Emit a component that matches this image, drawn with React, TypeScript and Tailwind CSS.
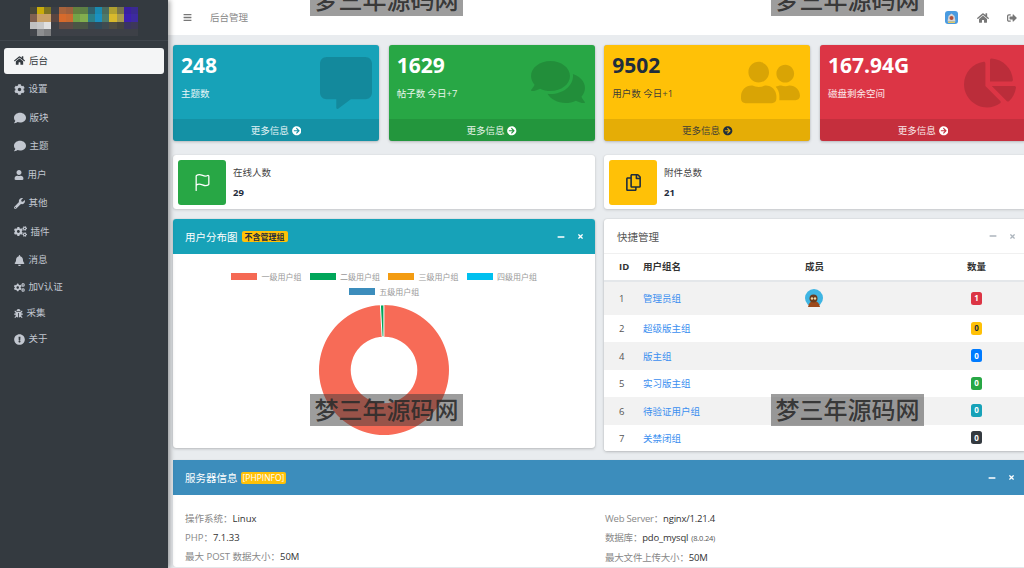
import type { ReactNode } from 'react'
import {
  FaArrowCircleRight,
  FaBars,
  FaBell,
  FaBug,
  FaChartPie,
  FaCog,
  FaCogs,
  FaComment,
  FaCommentAlt,
  FaComments,
  FaExclamationCircle,
  FaHome,
  FaMinus,
  FaRegCopy,
  FaSignOutAlt,
  FaTimes,
  FaUser,
  FaUserFriends,
  FaWrench,
} from 'react-icons/fa'
import { Flag } from 'lucide-react'

const NAV_ITEMS = [
  { label: '后台', icon: <FaHome size={11} />, row: 'h-[28.5px]', active: true },
  { label: '设置', icon: <FaCog size={11} />, row: 'h-[28.5px]' },
  { label: '版块', icon: <FaComment size={12} />, row: 'h-[28.5px]' },
  { label: '主题', icon: <FaComment size={12} />, row: 'h-[28.5px]' },
  { label: '用户', icon: <FaUser size={10} />, row: 'h-[28.5px]' },
  { label: '其他', icon: <FaWrench size={11} />, row: 'h-[28.5px]' },
  { label: '插件', icon: <FaCogs size={13} />, row: 'h-[28.5px]' },
  { label: '消息', icon: <FaBell size={11} />, row: 'h-[28px]' },
  { label: '加V认证', icon: <FaCogs size={11} />, row: 'h-[26.5px]' },
  { label: '采集', icon: <FaBug size={9} />, row: 'h-[26px]' },
  { label: '关于', icon: <FaExclamationCircle size={11} />, row: 'h-[26px]' },
]

const STATS: {
  value: string
  label: string
  bg: string
  text: string
  muted: string
  iconPos: string
  icon: ReactNode
}[] = [
  {
    value: '248',
    label: '主题数',
    bg: 'bg-[#17a2b8]',
    text: 'text-white',
    muted: 'text-white/90',
    iconPos: 'right-[7px] top-[12px]',
    icon: <FaCommentAlt size={52} />,
  },
  {
    value: '1629',
    label: '帖子数 今日+7',
    bg: 'bg-[#28a745]',
    text: 'text-white',
    muted: 'text-white/90',
    iconPos: 'right-[10px] top-[10px]',
    icon: <FaComments size={54} />,
  },
  {
    value: '9502',
    label: '用户数 今日+1',
    bg: 'bg-[#ffc107]',
    text: 'text-[#1f2d3d]',
    muted: 'text-[#1f2d3d]/90',
    iconPos: 'right-[10px] top-[7.5px]',
    icon: <FaUserFriends size={59} />,
  },
  {
    value: '167.94G',
    label: '磁盘剩余空间',
    bg: 'bg-[#dc3545]',
    text: 'text-white',
    muted: 'text-white/90',
    iconPos: 'right-[10px] top-[11.5px]',
    icon: <FaChartPie size={52} />,
  },
]

const LEGEND = [
  { label: '一级用户组', color: 'bg-[#f56954]' },
  { label: '二级用户组', color: 'bg-[#00a65a]' },
  { label: '三级用户组', color: 'bg-[#f39c12]' },
  { label: '四级用户组', color: 'bg-[#00c0ef]' },
  { label: '五级用户组', color: 'bg-[#3c8dbc]' },
]

const GROUPS = [
  { id: 1, name: '管理员组', count: 1, badge: 'bg-[#dc3545] text-white', row: 'h-[33px] bg-[#f2f2f2]', avatar: true },
  { id: 2, name: '超级版主组', count: 0, badge: 'bg-[#ffc107] text-[#1f2d3d]', row: 'h-[27px] bg-white' },
  { id: 4, name: '版主组', count: 0, badge: 'bg-[#007bff] text-white', row: 'h-[28px] bg-[#f2f2f2]' },
  { id: 5, name: '实习版主组', count: 0, badge: 'bg-[#28a745] text-white', row: 'h-[27px] bg-white' },
  { id: 6, name: '待验证用户组', count: 0, badge: 'bg-[#17a2b8] text-white', row: 'h-[27.5px] bg-[#f2f2f2]' },
  { id: 7, name: '关禁闭组', count: 0, badge: 'bg-[#343a40] text-white', row: 'h-[27.5px] bg-white' },
]

const LOGO_ROWS = [
  ['#474739', '#c9ac0a', '#7e7423', '#3c3f45', '#a8633b', '#9c5f3e', '#64803f', '#5d7f45', '#32606b', '#1a8ab0', '#4a6b5e', '#b0a030', '#77744a', '#3a1fa0', '#3a2a90'],
  ['#80604f', '#c8a068', '#c8a068', '#5a4540', '#d76a2b', '#cb6a30', '#74a348', '#82ae4e', '#2c7f87', '#1b90c0', '#4d7a6a', '#d8b92c', '#a89a4c', '#3d1fb0', '#3d2aa0'],
  ['#c0c0c0', '#c8c8c8', '#e0e0e0', '#3d3f45', '#5f4a45', '#604a45', '#4a5545', '#4a5545', '#3a4650', '#2f4a5a', '#3f4a50', '#4f4d42', '#45453f', '#3a3560', '#3d3858'],
  ['#42454b', '#8d8e90', '#7d7e80', '#3c4047', '#3d4047', '#3d4047', '#3d4047', '#3d4047', '#3d4047', '#3d4047', '#3d4047', '#3d4047', '#3d4047', '#3d4047', '#3d4047'],
]

function Logo() {
  return (
    <svg width="110" height="29" viewBox="0 0 15 4" shapeRendering="crispEdges">
      {LOGO_ROWS.map((row, y) => row.map((fill, x) => <rect key={`${x}-${y}`} x={x} y={y} width="1" height="1" fill={fill} />))}
    </svg>
  )
}

function Sidebar() {
  return (
    <aside className="z-10 flex h-full w-[168px] shrink-0 flex-col bg-[#343a40] shadow-[2px_0_5px_rgba(0,0,0,0.35)]">
      <div className="flex h-[41px] shrink-0 items-start border-b border-[#3f454c] pl-[29px] pt-[7px]">
        <Logo />
      </div>
      <nav className="px-[4px] pt-[5.5px]">
        {NAV_ITEMS.map((item) => (
          <div key={item.label} className={`flex items-center ${item.row}`}>
            <a
              className={
                item.active
                  ? 'flex h-[26px] w-full items-center gap-[4px] rounded-[3px] bg-[#f4f5f6] pl-[10px] text-[9.5px] text-[#343a40]'
                  : 'flex h-[26px] w-full items-center gap-[4px] rounded-[3px] pl-[9.5px] text-[9.5px] text-[#c2c7d0]'
              }
            >
              {item.icon}
              <span>{item.label}</span>
            </a>
          </div>
        ))}
      </nav>
    </aside>
  )
}

function TopNav() {
  return (
    <header className="flex h-[35px] shrink-0 items-center bg-white pl-[15px] pr-[7px] text-[#777]">
      <FaBars size={9} />
      <span className="ml-[18px] pt-[2px] text-[9.5px] text-[#888]">后台管理</span>
      <div className="ml-auto flex items-center">
        <svg width="13" height="13" viewBox="0 0 13 13">
          <rect width="13" height="13" rx="3" fill="#4a9be0" />
          <path d="M2.5 10.5 L3.5 5 L6.5 2.5 L9.5 5 L10.5 10.5 Z" fill="#d8d4d4" />
          <circle cx="6.5" cy="7" r="2" fill="#b0503a" />
          <rect x="3" y="10.5" width="7" height="1.5" fill="#e0c868" />
        </svg>
        <FaHome size={12} className="ml-[19px]" />
        <FaSignOutAlt size={10} className="ml-[18px]" />
      </div>
    </header>
  )
}

function StatCard({ stat }: { stat: (typeof STATS)[number] }) {
  return (
    <div className={`relative flex h-[96px] flex-col overflow-hidden rounded-[3px] shadow-[0_0_1px_rgba(0,0,0,0.2),0_1px_3px_rgba(0,0,0,0.2)] ${stat.bg} ${stat.text}`}>
      <div className="h-[74px] pl-[8px] pt-[6px]">
        <div className="text-[21px] font-bold leading-[28px]">{stat.value}</div>
        <div className={`mt-[8px] text-[9.5px] leading-[14px] ${stat.muted}`}>{stat.label}</div>
      </div>
      <div className={`absolute text-black/15 ${stat.iconPos}`}>{stat.icon}</div>
      <div className="flex h-[22px] items-center justify-center gap-[3px] bg-black/10 pt-[2px] text-[9.5px]">
        <span className={stat.muted}>更多信息</span>
        <FaArrowCircleRight size={9.5} />
      </div>
    </div>
  )
}

function InfoBox({ label, value, iconBg, icon }: { label: string; value: number; iconBg: string; icon: ReactNode }) {
  return (
    <div className="flex h-[54px] items-center rounded-[3px] bg-white pl-[5px] shadow-[0_0_1px_rgba(0,0,0,0.15),0_1px_3px_rgba(0,0,0,0.15)]">
      <div className={`flex h-[45px] w-[48px] items-center justify-center rounded-[3px] ${iconBg}`}>{icon}</div>
      <div className="ml-[7px] flex flex-col pt-[2px] text-[9.5px] leading-[14px] text-[#444]">
        <span>{label}</span>
        <span className="mt-[6px] font-bold text-[#1f2d3d]">{value}</span>
      </div>
    </div>
  )
}

function PanelTools({ color }: { color: string }) {
  return (
    <div className={`ml-auto flex items-center gap-[12px] ${color}`}>
      <FaMinus size={8} />
      <FaTimes size={7} />
    </div>
  )
}

function Donut() {
  return (
    <svg width="132" height="132" viewBox="-66 -66 132 132">
      <path
        fillRule="evenodd"
        fill="#f76b57"
        d="M0 -65 A65 65 0 1 1 -0.01 -65 Z M0 -33.3 A33.3 33.3 0 1 0 0.01 -33.3 Z"
      />
      <path d="M-3.6 -65 L-0.1 -65.1 L-0.1 -33.3 L-1.9 -33.3 Z" fill="#00a65a" stroke="#fff" strokeWidth="1" />
    </svg>
  )
}

function UserChart() {
  return (
    <section className="h-[228.5px] overflow-hidden rounded-[3px] bg-white shadow-[0_0_1px_rgba(0,0,0,0.2),0_1px_3px_rgba(0,0,0,0.2)]">
      <div className="flex h-[35px] items-center bg-[#17a2b8] pl-[12px] pr-[11px] text-white">
        <span className="pt-[2px] text-[10.5px]">用户分布图</span>
        <span className="ml-[4px] rounded-[2px] bg-[#ffc107] px-[3px] text-[8px] font-bold leading-[11px] text-[#1f2d3d]">不含管理组</span>
        <PanelTools color="text-white" />
      </div>
      <div className="flex flex-col items-center pt-[15px]">
        <div className="flex w-[340px] flex-wrap justify-center gap-x-[8px]">
          {LEGEND.map((item) => (
            <div key={item.label} className="flex h-[15px] items-center gap-[4.5px]">
              <i className={`h-[7px] w-[26px] ${item.color}`} />
              <span className="text-[8px] text-[#999]">{item.label}</span>
            </div>
          ))}
        </div>
        <div className="mt-[4.5px]">
          <Donut />
        </div>
      </div>
    </section>
  )
}

function MemberAvatar() {
  return (
    <svg width="18" height="18" viewBox="0 0 18 18" className="-mt-[1px]">
      <circle cx="9" cy="9" r="9" fill="#3fb5e3" />
      <path d="M3 18 Q4 12 9 12 Q14 12 15 18 Z" fill="#9c4a1c" />
      <circle cx="8.5" cy="9.5" r="4" fill="#6b3d1e" />
      <circle cx="7" cy="9.5" r="1.2" fill="#f0d9a8" />
      <circle cx="10" cy="9.5" r="1.2" fill="#f0d9a8" />
    </svg>
  )
}

function GroupTable() {
  const cols = 'grid grid-cols-[24px_162px_162px_19px] items-center pl-[15px]'
  return (
    <section className="h-[232px] overflow-hidden rounded-[3px] bg-white shadow-[0_0_1px_rgba(0,0,0,0.2),0_1px_3px_rgba(0,0,0,0.2)]">
      <div className="flex h-[35px] items-center border-b border-[#f0f0f0] pl-[13px] pr-[10px] text-[#555]">
        <span className="pt-[3px] text-[10.5px]">快捷管理</span>
        <PanelTools color="text-[#adb5bd]" />
      </div>
      <div className={`${cols} h-[28px] border-b-2 border-[#e4e7ea] text-[9.5px] font-bold text-[#333]`}>
        <span>ID</span>
        <span>用户组名</span>
        <span>成员</span>
        <span>数量</span>
      </div>
      {GROUPS.map((group) => (
        <div key={group.id} className={`${cols} text-[9.5px] text-[#555] ${group.row}`}>
          <span className="pt-[2px]">{group.id}</span>
          <a className="pt-[2px] text-[#3b8ff0]">{group.name}</a>
          <span className="flex">{group.avatar && <MemberAvatar />}</span>
          <span className="flex justify-center pb-[1px]">
            <b className={`flex h-[13px] w-[11px] items-center justify-center rounded-[2.5px] text-[8px] leading-none ${group.badge}`}>{group.count}</b>
          </span>
        </div>
      ))}
    </section>
  )
}

const SERVER_LEFT = [
  ['操作系统：', 'Linux'],
  ['PHP：', '7.1.33'],
  ['最大 POST 数据大小：', '50M'],
]

const SERVER_RIGHT: [string, string, string?][] = [
  ['Web Server：', 'nginx/1.21.4'],
  ['数据库：', 'pdo_mysql', '(8.0.24)'],
  ['最大文件上传大小：', '50M'],
]

function ServerInfo() {
  return (
    <section className="mt-[9px] rounded-[3px] bg-white shadow-[0_0_1px_rgba(0,0,0,0.2)]">
      <div className="flex h-[35px] items-center bg-[#3c8dbc] pl-[12px] pr-[11px] text-white">
        <span className="pt-[3px] text-[10.5px]">服务器信息</span>
        <span className="ml-[3px] mt-[1px] rounded-[2px] bg-[#ffc107] px-[2px] text-[8.5px] leading-[12px]">[PHPINFO]</span>
        <PanelTools color="text-white" />
      </div>
      <div className="grid grid-cols-[420px_1fr] pl-[12px] pt-[13.5px] text-[9.5px] leading-[19px] text-[#888]">
        <div>
          {SERVER_LEFT.map(([label, value]) => (
            <div key={label}>
              {label}
              <span className="text-[#333]">{value}</span>
            </div>
          ))}
        </div>
        <div className="tracking-[-0.2px]">
          {SERVER_RIGHT.map(([label, value, note]) => (
            <div key={label}>
              {label}
              <span className="text-[#333]">{value}</span>
              {note && <span className="ml-[3px] text-[7.5px] text-[#555]">{note}</span>}
            </div>
          ))}
        </div>
      </div>
    </section>
  )
}

// the pasted-on site stamps that lie over the screenshot
function Stamps() {
  const stamp =
    'pointer-events-none absolute flex h-[32px] w-[153px] items-center justify-center bg-[rgba(60,60,60,0.5)] text-[24px] font-medium text-[#2b2b2b]/90'
  const faint = 'pointer-events-none absolute text-[30px] leading-none tracking-wide text-black/[0.025]'
  return (
    <>
      <div className={`${faint} left-[315px] top-[422px]`}>www.zxki.cn</div>
      <div className={`${faint} left-[620px] top-[118px]`}>www.zxki</div>
      <div className={`${faint} left-[945px] top-[422px]`}>www</div>
      <div className={`${stamp} left-[310px] top-[-16px]`}>梦三年源码网</div>
      <div className={`${stamp} left-[771px] top-[-16px]`}>梦三年源码网</div>
      <div className={`${stamp} left-[310px] top-[394px]`}>梦三年源码网</div>
      <div className={`${stamp} left-[771px] top-[394px]`}>梦三年源码网</div>
    </>
  )
}

export default function App() {
  return (
    <div className="relative flex h-[568px] w-[1024px] overflow-hidden bg-[#e9ecef] font-['Open_Sans','Noto_Sans_CJK_SC',sans-serif]">
      <Sidebar />
      <main className="flex min-w-0 flex-1 flex-col">
        <TopNav />
        <div className="ml-[5px] w-[853px] shrink-0 pt-[10px]">
          <div className="grid grid-cols-4 gap-x-[9.67px]">
            {STATS.map((stat) => (
              <StatCard key={stat.label} stat={stat} />
            ))}
          </div>
          <div className="mt-[14px] grid grid-cols-2 gap-x-[9px]">
            <InfoBox label="在线人数" value={29} iconBg="bg-[#28a745]" icon={<Flag size={19} strokeWidth={1.6} className="text-white" />} />
            <InfoBox label="附件总数" value={21} iconBg="bg-[#ffc107]" icon={<FaRegCopy size={17} className="text-[#1f2d3d]" />} />
          </div>
          <div className="mt-[10px] grid grid-cols-2 items-start gap-x-[9px]">
            <UserChart />
            <GroupTable />
          </div>
          <ServerInfo />
        </div>
      </main>
      <Stamps />
    </div>
  )
}
